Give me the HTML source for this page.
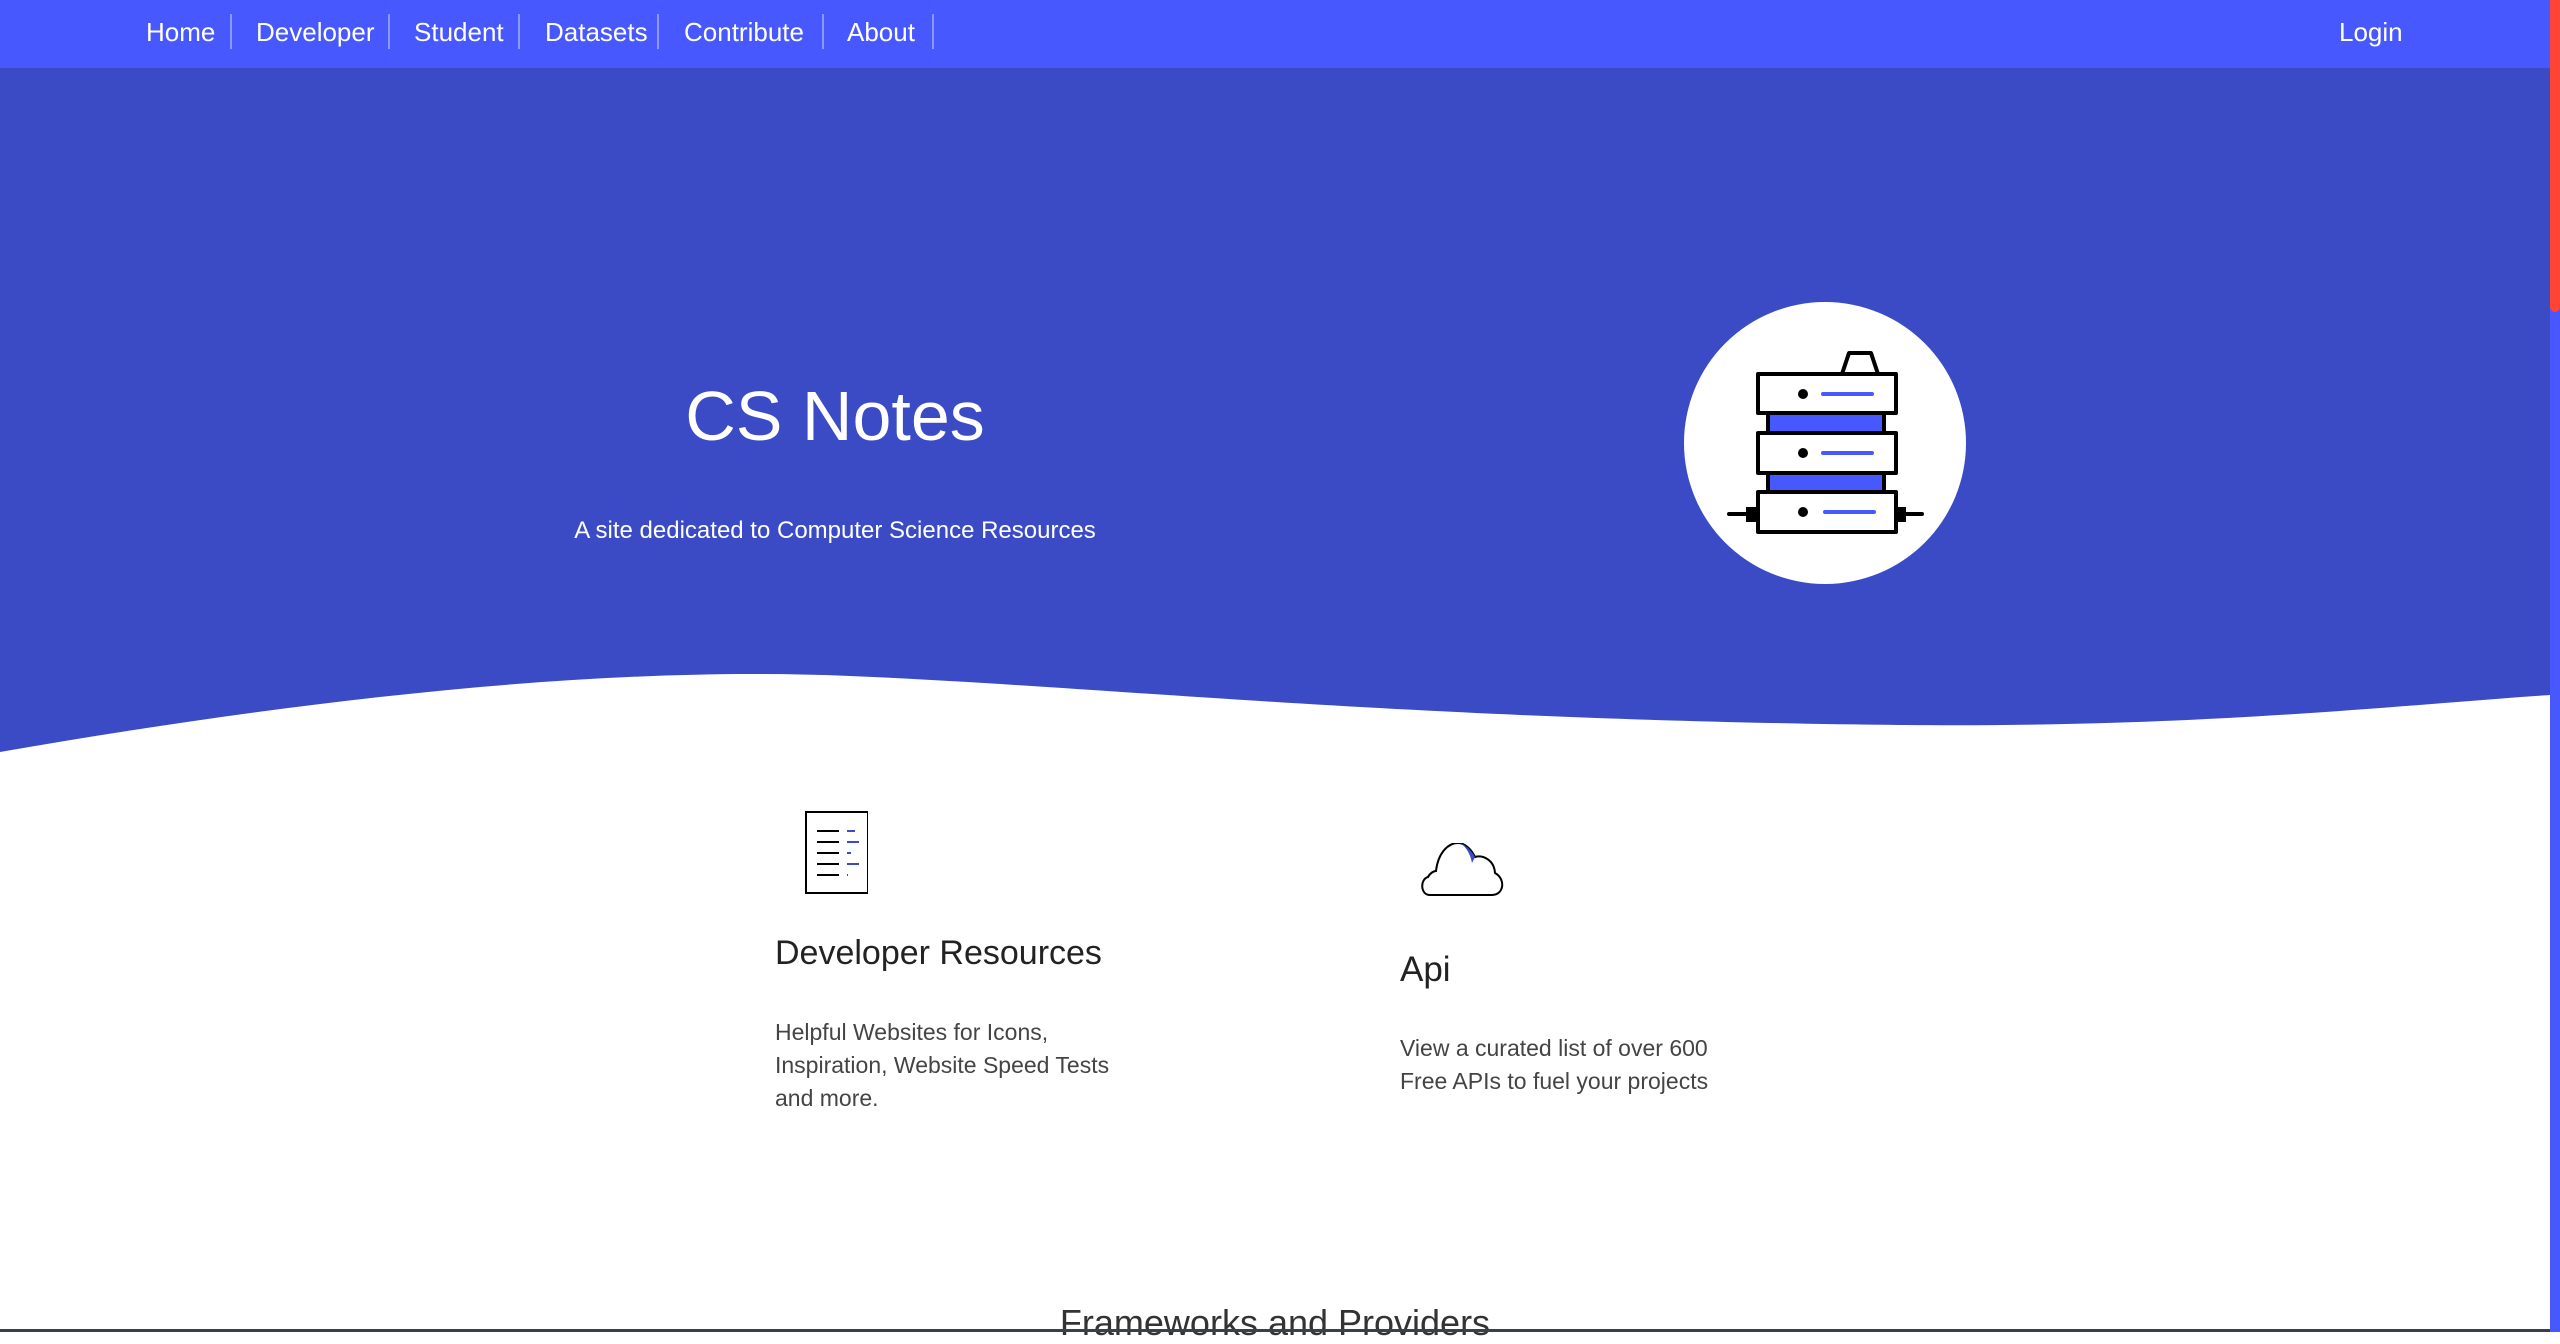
<!DOCTYPE html>
<html><head><meta charset="utf-8"><style>
*{margin:0;padding:0;box-sizing:border-box}
body{width:2560px;height:1332px;overflow:hidden;background:#fff;font-family:"Liberation Sans","DejaVu Sans",sans-serif;position:relative}
.nav{position:absolute;left:0;top:0;width:2550px;height:68px;background:#4858ff}
.nav a{position:absolute;top:17px;color:#fff;font-size:26px;text-decoration:none;white-space:nowrap}
.sep{position:absolute;top:14px;width:2px;height:35px;background:#8e97ff}
.hero{position:absolute;left:0;top:68px;width:2550px;height:700px;background:#3b4bc5}
.t{position:absolute;white-space:nowrap}
.sb{position:absolute;left:2550px;top:0;width:10px;height:1332px;background:#4858ff}
.thumb{position:absolute;left:2550px;top:0;width:10px;height:312px;background:#fe4434;border-radius:0 0 5px 5px}
</style></head><body>
<div class="nav">
<a style="left:146px">Home</a><div class="sep" style="left:230px"></div>
<a style="left:256px">Developer</a><div class="sep" style="left:388px"></div>
<a style="left:414px">Student</a><div class="sep" style="left:518px"></div>
<a style="left:545px">Datasets</a><div class="sep" style="left:657px"></div>
<a style="left:684px">Contribute</a><div class="sep" style="left:822px"></div>
<a style="left:847px">About</a><div class="sep" style="left:932px"></div>
<a style="left:2339px">Login</a>
</div>
<div class="hero"></div>
<svg style="position:absolute;left:0;top:600px" width="2550" height="200" viewBox="0 600 2550 200">
<path d="M0 752 C300 700 600 665 850 676 C1100 686 1400 720 1900 725 C2200 728 2400 705 2550 695 L2550 800 L0 800 Z" fill="#fff"/>
</svg>
<div class="t" style="left:0;width:1670px;text-align:center;top:376px;font-size:70px;color:#fff">CS Notes</div>
<div class="t" style="left:0;width:1670px;text-align:center;top:517px;font-size:24px;color:#fff">A site dedicated to Computer Science Resources</div>
<svg style="position:absolute;left:1684px;top:302px" width="282" height="282" viewBox="0 0 282 282">
<circle cx="141" cy="141" r="141" fill="#fff"/>
<rect x="84" y="109" width="116" height="24" fill="#4858ff" stroke="#000" stroke-width="4"/>
<rect x="84" y="168" width="116" height="24" fill="#4858ff" stroke="#000" stroke-width="4"/>
<g stroke="#000" stroke-width="4" stroke-linejoin="round" stroke-linecap="round">
<path d="M158 72 L165 51 L187 51 L194 72" fill="none"/>
<rect x="74" y="72" width="138" height="39" fill="#fff"/>
<rect x="74" y="131" width="138" height="40" fill="#fff"/>
<rect x="74" y="190" width="138" height="40" fill="#fff"/>
<path d="M45 212 H64 M220 212 H238" fill="none"/>
</g>
<rect x="62" y="205" width="10" height="15" fill="#000"/>
<rect x="213" y="205" width="9" height="15" fill="#000"/>
<g fill="#000"><circle cx="119" cy="92" r="5"/><circle cx="119" cy="151" r="5"/><circle cx="119" cy="210" r="5"/></g>
<g stroke="#4858ff" stroke-width="4" stroke-linecap="round"><path d="M139 92H188M139 151H188M141 210H190"/></g>
</svg>
<svg style="position:absolute;left:798px;top:810px" width="70" height="86" viewBox="0 0 70 86">
<rect x="8" y="2" width="62" height="81" fill="#fff" stroke="#000" stroke-width="2"/>
<g stroke="#000" stroke-width="2"><path d="M19 21H41M19 32H41M19 43H41M19 54H41M19 65H41"/></g>
<g stroke="#3b4bc5" stroke-width="2"><path d="M49 21H57M49 32H61M49 43H53M49 54H61M49 65H50"/></g>
</svg>
<svg style="position:absolute;left:1420px;top:843px" width="86" height="55" viewBox="0 0 86 55">
<path d="M10 52 C0 52 0 36 8 34 C10 30 14 28 16 28 C18 10 28 0 38 0 C46 0 52 8 55 14 C62 12 74 16 75 30 C86 36 84 52 72 52 Z" fill="#fff" stroke="#000" stroke-width="2"/>
<path d="M40 0 C46 2 52 8 55 14 L52 20 C50 10 46 4 40 0Z" fill="#3b4bc5"/>
</svg>
<div class="t" style="left:775px;top:934px;font-size:34px;color:#222">Developer Resources</div>
<div class="t" style="left:775px;top:1016px;font-size:23px;line-height:33px;color:#444">Helpful Websites for Icons,<br>Inspiration, Website Speed Tests<br>and more.</div>
<div class="t" style="left:1400px;top:950px;font-size:35px;color:#222">Api</div>
<div class="t" style="left:1400px;top:1032px;font-size:23px;line-height:33px;color:#444">View a curated list of over 600<br>Free APIs to fuel your projects</div>
<div class="t" style="left:0;width:2550px;text-align:center;top:1302px;font-size:36px;color:#333">Frameworks and Providers</div>
<div style="position:absolute;left:0;top:1329px;width:2550px;height:3px;background:#3a3f4a"></div>
<div class="sb"></div><div class="thumb"></div>
</body></html>
